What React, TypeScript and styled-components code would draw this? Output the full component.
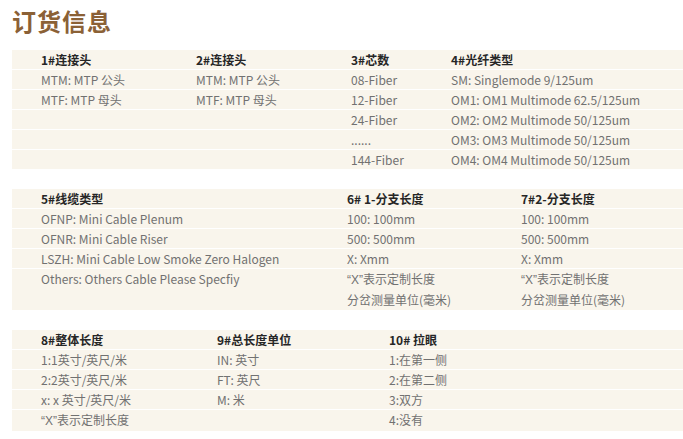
import styled, { createGlobalStyle } from 'styled-components';

const GlobalStyle = createGlobalStyle`
    html, body {
        margin: 0;
        padding: 0;
        background: #fff;
    }
    body {
        font-family: "Noto Sans CJK SC", "Noto Sans", sans-serif;
    }
`

const Page = styled.div`
    padding: 9px 0 0 12px;
    width: 671px;
`

const Title = styled.h1`
    margin: 0 0 17px;
    font-size: 24px;
    line-height: 24px;
    font-weight: 700;
    color: #8b6136;
    letter-spacing: 1px;
`

const Table = styled.div<{ $cols: string }>`
    display: grid;
    grid-template-columns: ${p => p.$cols};
    background-color: #f9f5ec;
    padding-left: 29px;
    margin-bottom: 20px;
`

const Row = styled.div`
    display: contents;

    &:not(:last-child) > div {
        border-bottom: 1px solid #fff;
    }
`

const Cell = styled.div<{ $head?: boolean }>`
    min-height: 19px;
    line-height: 19px;
    font-size: 12px;
    white-space: nowrap;
    color: ${p => p.$head ? '#262626' : '#717171'};
    font-weight: ${p => p.$head ? 700 : 400};
    margin-left: -29px;
    padding-left: 29px;

    & + & {
        margin-left: 0;
        padding-left: 0;
    }

    span {
        display: block;
        line-height: 20px;
    }
`

// narrow latin quotes instead of the full-width CJK ones
const Quoted = styled.i`
    font-style: normal;
    font-family: "Liberation Sans", sans-serif;
`

type Value = string | string[];

type Section = {
    cols: string;
    head: string[];
    rows: Value[][];
}

const custom = '“X”表示定制长度';

const sections: Section[] = [
    {
        cols: '155px 155px 100px 1fr',
        head: ['1#连接头', '2#连接头', '3#芯数', '4#光纤类型'],
        rows: [
            ['MTM: MTP 公头', 'MTM: MTP 公头', '08-Fiber', 'SM: Singlemode 9/125um'],
            ['MTF: MTP 母头', 'MTF: MTP 母头', '12-Fiber', 'OM1: OM1 Multimode 62.5/125um'],
            ['', '', '24-Fiber', 'OM2: OM2 Multimode 50/125um'],
            ['', '', '......', 'OM3: OM3 Multimode 50/125um'],
            ['', '', '144-Fiber', 'OM4: OM4 Multimode 50/125um'],
        ],
    },
    {
        cols: '306px 174px 1fr',
        head: ['5#线缆类型', '6# 1-分支长度', '7#2-分支长度'],
        rows: [
            ['OFNP: Mini Cable Plenum', '100: 100mm', '100: 100mm'],
            ['OFNR: Mini Cable Riser', '500: 500mm', '500: 500mm'],
            ['LSZH: Mini Cable Low Smoke Zero Halogen', 'X: Xmm', 'X: Xmm'],
            ['Others: Others Cable Please Specfiy', [custom, '分岔测量单位(毫米)'], [custom, '分岔测量单位(毫米)']],
        ],
    },
    {
        cols: '176px 172px 1fr',
        head: ['8#整体长度', '9#总长度单位', '10# 拉眼'],
        rows: [
            ['1:1英寸/英尺/米', 'IN: 英寸', '1:在第一侧'],
            ['2:2英寸/英尺/米', 'FT: 英尺', '2:在第二侧'],
            ['x: x 英寸/英尺/米', 'M: 米', '3:双方'],
            [custom, '', '4:没有'],
        ],
    },
]

const renderText = (t: string) => {
    if (!t.startsWith('“')) return t;
    const end = t.indexOf('”') + 1;
    return <><Quoted>{t.slice(0, end)}</Quoted>{t.slice(end)}</>
}

const renderValue = (v: Value) =>
    Array.isArray(v) ? <>{v.map(line => <span key={line}>{renderText(line)}</span>)}</> : renderText(v)

const App = () => {
    return (
        <Page>
            <GlobalStyle />
            <Title>订货信息</Title>
            {sections.map((s, si) => (
                <Table key={si} $cols={s.cols}>
                    <Row>
                        {s.head.map(h => <Cell $head key={h}>{h}</Cell>)}
                    </Row>
                    {s.rows.map((r, ri) => (
                        <Row key={ri}>
                            {r.map((v, ci) => <Cell key={ci}>{renderValue(v)}</Cell>)}
                        </Row>
                    ))}
                </Table>
            ))}
        </Page>
    )
}

export default App;
